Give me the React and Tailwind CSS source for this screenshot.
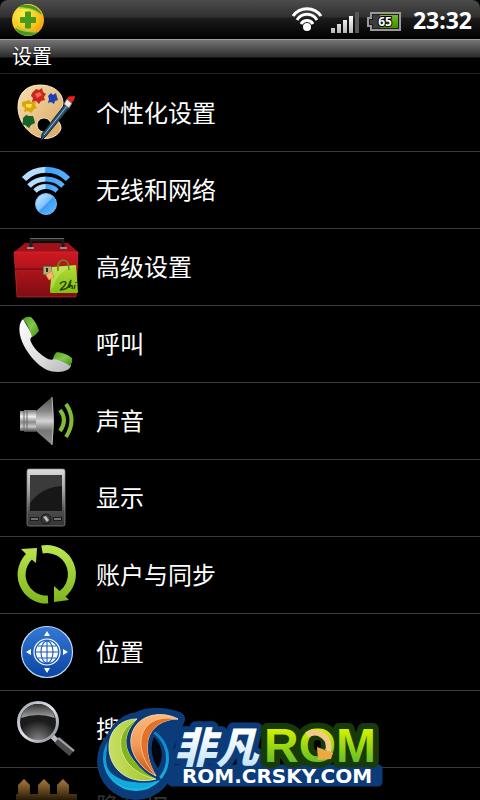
import React from "react";

const iconClass = "h-[76px] w-[68px] shrink-0";

function PaletteIcon() {
  return (
    <svg viewBox="0 0 68 76" className={iconClass} aria-hidden="true">
      <defs>
        <linearGradient id="wood" x1="0" y1="0" x2="1" y2="1">
          <stop offset="0" stopColor="#f6dfae" />
          <stop offset="1" stopColor="#d9a662" />
        </linearGradient>
      </defs>
      <path fillRule="evenodd" d="M28 10C42 10 51 18 51 28C51 34 45 36 45 42C45 46 49 48 49 53C48 60 38 65 30 63C16 60 6 46 6 32C6 18 15 10 28 10ZM32 43a7 7 0 1 0 0.1 0Z" fill="url(#wood)" stroke="#f9e9c5" strokeWidth="1" />
      <path d="M20 18l4-4 3 1 3-2 1 4 3 2-2 3 1 3-4 1-2 3-3-3-4 1 1-4-2-2Z" fill="#c9261d" />
      <path d="M23 19l5-2 2 3-5 3Z" fill="#ef6a4e" />
      <path d="M36 21l3-3 2 2 3-2 1 4 1 3-3 1-1 3-3-2-3 1 1-4Z" fill="#1d3fb4" />
      <path d="M10 27l4-1 3-1 2 2 5 0-1 3 2 3-4 2-1 3-4-2-4 1 1-4-3-2Z" fill="#dba60b" />
      <path d="M14 29l6 0-1 4-5-1Z" fill="#ffdf4d" />
      <path d="M11 43l3-3 3 1 4 0 1 3 1 4-4 2-2 3-4-3-3 0 1-4Z" fill="#17622b" />
      <path d="M54 28L58 32L34 61L29 66L30 59Z" fill="#2c516d" stroke="#0f2536" strokeWidth="1" />
      <path d="M55 31L32 60" stroke="#9dc3d8" strokeWidth="1" />
      <path d="M55 24L60 28L57 33L52 29Z" fill="#e8e8e8" stroke="#777" strokeWidth="1" />
      <path d="M55 24C56 20 60 22 63 21C63 24 61 27 59 28Z" fill="#e0261c" />
    </svg>
  );
}

function WirelessIcon() {
  return (
    <svg viewBox="0 0 68 76" className={iconClass} aria-hidden="true">
      <defs>
        <linearGradient id="arc" x1="0" y1="0" x2="1" y2="0">
          <stop offset="0.46" stopColor="#b4ddff" />
          <stop offset="0.5" stopColor="#3aa0fb" />
          <stop offset="1" stopColor="#58b1ff" />
        </linearGradient>
        <linearGradient id="ball" x1="0" y1="0" x2="1" y2="1">
          <stop offset="0.1" stopColor="#c4e4ff" />
          <stop offset="0.48" stopColor="#7fc2ff" />
          <stop offset="0.52" stopColor="#3b9df7" />
          <stop offset="1" stopColor="#6dbaff" />
        </linearGradient>
      </defs>
      <g fill="none" stroke="url(#arc)">
        <path d="M12 27A31 31 0 0 1 56 27" strokeWidth="6" />
        <path d="M17 34A24 24 0 0 1 51 34" strokeWidth="5" />
        <path d="M23 39A16 16 0 0 1 45 39" strokeWidth="5" />
      </g>
      <circle cx="34" cy="52" r="10.5" fill="url(#ball)" stroke="#6ab8fb" strokeWidth="1" />
    </svg>
  );
}

function ToolboxIcon() {
  return (
    <svg viewBox="0 0 68 76" className={iconClass} aria-hidden="true">
      <defs>
        <linearGradient id="box" x1="0" y1="0" x2="0" y2="1">
          <stop offset="0" stopColor="#cf1822" />
          <stop offset="0.35" stopColor="#b3141c" />
          <stop offset="1" stopColor="#7d0d12" />
        </linearGradient>
        <linearGradient id="bag" x1="0" y1="0" x2="0" y2="1">
          <stop offset="0" stopColor="#b5dc3a" />
          <stop offset="1" stopColor="#7fc010" />
        </linearGradient>
      </defs>
      <path d="M13 14H56L66 23H2Z" fill="#a11119" />
      <path d="M2 23H66L64 68H5Z" fill="url(#box)" stroke="#d8333a" strokeWidth="0.6" />
      <path d="M3 40H65" stroke="#58090d" strokeWidth="1.2" />
      <path d="M19 19V11H51V19" fill="none" stroke="#1d1d1d" strokeWidth="3" />
      <path d="M18 9.500H52" stroke="#666" strokeWidth="1" />
      <path d="M15 19h7M48 19h7" stroke="#8f8f8f" strokeWidth="2" />
      <rect x="31" y="37" width="9" height="9" fill="#b9a878" stroke="#4d4129" strokeWidth="1" />
      <path d="M35 39v4" stroke="#33290f" strokeWidth="2" />
      <path d="M40 38L64 36L66 63Q66 64 65 64H39Q38 64 38 63Z" fill="url(#bag)" />
      <path d="M42 57C45 44 54 40 64 37L40 38L38 62Z" fill="#d5ee7c" opacity="0.45" />
      <path d="M46 42C45 34 48 31 51 31C55 31 57 34 57 41" fill="none" stroke="#668c19" strokeWidth="1.6" />
      <path d="M34 46L40 42L42 48L37 51Z" fill="#f9b56c" stroke="#d98540" strokeWidth="0.7" />
      <path d="M48 55c2-3 6-3 6-1c-1 3-4 5-6 7c3-1 6 0 8-3l3-7-2 8c2-4 4-3 3 1M63 56l-1 4M64 53v1" fill="none" stroke="#243b09" strokeWidth="1.4" />
    </svg>
  );
}

function CallIcon() {
  return (
    <svg viewBox="0 0 68 76" className={iconClass} aria-hidden="true">
      <defs>
        <linearGradient id="handset" x1="0" y1="0" x2="1" y2="1">
          <stop offset="0" stopColor="#ffffff" />
          <stop offset="0.6" stopColor="#dcdcdc" />
          <stop offset="1" stopColor="#b5b5b5" />
        </linearGradient>
        <linearGradient id="cap" x1="0" y1="0" x2="1" y2="1">
          <stop offset="0" stopColor="#4c9c1b" />
          <stop offset="0.5" stopColor="#83c94a" />
          <stop offset="1" stopColor="#3f8a14" />
        </linearGradient>
      </defs>
      <path d="M11 13C7 17 7 23 8 29C10 38 16 48 24 56C31 63 38 66 46 66C53 66 59 63 59 59L43 52C41 54 39 54 36 53C29 49 22 43 19 36C18 33 18 32 21 30Z" fill="url(#handset)" />
      <path d="M11 13Q14 10 19 11Q25 17 27 25Q24 29 20 31Q17 20 11 13Z" fill="url(#cap)" />
      <path d="M45 46Q54 47 60 52Q61 56 58 60Q51 54 41 53Q42 48 45 46Z" fill="url(#cap)" />
    </svg>
  );
}

function SoundIcon() {
  return (
    <svg viewBox="0 0 68 76" className={iconClass} aria-hidden="true">
      <defs>
        <linearGradient id="metal" x1="0" y1="0" x2="0" y2="1">
          <stop offset="0" stopColor="#777" />
          <stop offset="0.3" stopColor="#efefef" />
          <stop offset="0.55" stopColor="#8a8a8a" />
          <stop offset="0.75" stopColor="#c9c9c9" />
          <stop offset="1" stopColor="#3c3c3c" />
        </linearGradient>
        <linearGradient id="cone" x1="0" y1="0" x2="0" y2="1">
          <stop offset="0" stopColor="#505050" />
          <stop offset="0.3" stopColor="#888" />
          <stop offset="0.5" stopColor="#d4d4d4" />
          <stop offset="0.7" stopColor="#777" />
          <stop offset="1" stopColor="#8c8c8c" />
        </linearGradient>
      </defs>
      <path d="M8 28H12V27H24V49H12V48H8Z" fill="url(#metal)" />
      <path d="M12 28V48M15 28V48" stroke="#666" strokeWidth="1" />
      <path d="M24 28L40 14Q43 38 40 62L24 48Z" fill="url(#cone)" />
      <path d="M40 14Q43 38 40 62" fill="none" stroke="#bbb" strokeWidth="1" />
      <g fill="none" stroke="#82bb35" strokeWidth="4">
        <path d="M48 27Q56 37 48 48" />
        <path d="M54 21Q65 37 54 54" />
      </g>
    </svg>
  );
}

function DisplayIcon() {
  return (
    <svg viewBox="0 0 68 76" className={iconClass} aria-hidden="true">
      <defs>
        <linearGradient id="device" x1="0" y1="0" x2="0" y2="1">
          <stop offset="0" stopColor="#dedede" />
          <stop offset="0.4" stopColor="#a0a0a0" />
          <stop offset="0.75" stopColor="#4b4b4b" />
          <stop offset="1" stopColor="#343434" />
        </linearGradient>
      </defs>
      <rect x="15" y="9" width="38" height="57" rx="2" fill="url(#device)" stroke="#8c8c8c" strokeWidth="0.7" />
      <rect x="18" y="15" width="32" height="36" fill="#171717" />
      <path d="M18 15H50V26Q30 27 18 43Z" fill="#3b3b3b" />
      <path d="M18 59h9M41 59h9" stroke="#1c1c1c" strokeWidth="4" />
      <path d="M19 59h7M42 59h7" stroke="#8c8c8c" strokeWidth="1.5" />
      <circle cx="34" cy="59" r="5" fill="#3a3a3a" stroke="#161616" strokeWidth="1" />
      <path d="M31 57L34 56L37 60L35 62Z" fill="#bdbdbd" />
    </svg>
  );
}

function SyncIcon() {
  return (
    <svg viewBox="0 0 68 76" className={iconClass} aria-hidden="true">
      <defs>
        <linearGradient id="sync" gradientUnits="userSpaceOnUse" x1="0" y1="9" x2="0" y2="67">
          <stop offset="0" stopColor="#bce650" />
          <stop offset="1" stopColor="#7fb41c" />
        </linearGradient>
      </defs>
      <g fill="none" stroke="url(#sync)" strokeWidth="8">
        <path d="M30 12.500A25.200 25.200 0 0 1 49 58" />
        <path d="M36 62.500A25 25 0 0 1 19 18" />
      </g>
      <path d="M9 12L25 11L24 26L19 22L14 17Z" fill="url(#sync)" />
      <path d="M42 49V65L57 63L51 57Z" fill="url(#sync)" />
    </svg>
  );
}

function LocationIcon() {
  return (
    <svg viewBox="0 0 68 76" className={iconClass} aria-hidden="true">
      <defs>
        <linearGradient id="disc" x1="0" y1="0" x2="0" y2="1">
          <stop offset="0" stopColor="#3479d6" />
          <stop offset="1" stopColor="#0a45a4" />
        </linearGradient>
      </defs>
      <circle cx="35" cy="38" r="25.5" fill="url(#disc)" stroke="#c4d9f4" strokeWidth="1.2" />
      <circle cx="35" cy="38" r="13" fill="none" stroke="#fff" strokeWidth="1.2" />
      <circle cx="35" cy="38" r="11" fill="#fff" />
      <g fill="none" stroke="#185abc" strokeWidth="1.1">
        <path d="M35 27V49M24 38H46M26 32H44M26 44H44" />
        <ellipse cx="35" cy="38" rx="6" ry="11" />
      </g>
      <path d="M35 17l3 5h-6ZM35 59l3-5h-6ZM14 38l5-3v6ZM56 38l-5-3v6Z" fill="#fff" />
    </svg>
  );
}

function SearchIcon() {
  return (
    <svg viewBox="0 0 68 76" className={iconClass} aria-hidden="true">
      <defs>
        <radialGradient id="lens" cx="0.5" cy="1" r="0.9">
          <stop offset="0" stopColor="#8a8a8a" />
          <stop offset="0.6" stopColor="#1c1c1c" />
          <stop offset="1" stopColor="#1a1a1a" />
        </radialGradient>
        <linearGradient id="glare" x1="0" y1="0" x2="0" y2="1">
          <stop offset="0" stopColor="#333" />
          <stop offset="1" stopColor="#a5a5a5" />
        </linearGradient>
        <linearGradient id="rim" x1="0" y1="0" x2="1" y2="1">
          <stop offset="0" stopColor="#9ba0ab" />
          <stop offset="0.5" stopColor="#e3e6ec" />
          <stop offset="1" stopColor="#7c818c" />
        </linearGradient>
      </defs>
      <path d="M40 45L45 50" stroke="#b8bcc6" strokeWidth="5" />
      <path d="M45 49L60 62" stroke="#4b4b4b" strokeWidth="8" />
      <path d="M46 47L62 60" stroke="#a5a5a5" strokeWidth="2" />
      <circle cx="26" cy="31" r="19.5" fill="url(#lens)" stroke="url(#rim)" strokeWidth="3" />
      <path d="M9 27C11 18 18 13 26 13C34 13 41 18 43 27Q26 21 9 27Z" fill="url(#glare)" />
    </svg>
  );
}

function FenceIcon() {
  return (
    <svg viewBox="0 0 68 76" className={iconClass} aria-hidden="true">
      <defs>
        <linearGradient id="fence" gradientUnits="userSpaceOnUse" x1="0" y1="11" x2="0" y2="34">
          <stop offset="0" stopColor="#a97c3c" />
          <stop offset="1" stopColor="#1b1003" />
        </linearGradient>
      </defs>
      <path d="M4 26H65V60H4Z" fill="url(#fence)" />
      <path d="M6 17L12 11L18 17V66H6ZM26 17L32 11L38 17V66H26ZM45 17L51 11L57 17V66H45Z" fill="url(#fence)" />
    </svg>
  );
}

const rows = [
  { label: "个性化设置", Icon: PaletteIcon },
  { label: "无线和网络", Icon: WirelessIcon },
  { label: "高级设置", Icon: ToolboxIcon },
  { label: "呼叫", Icon: CallIcon },
  { label: "声音", Icon: SoundIcon },
  { label: "显示", Icon: DisplayIcon },
  { label: "账户与同步", Icon: SyncIcon },
  { label: "位置", Icon: LocationIcon },
  { label: "搜索", Icon: SearchIcon },
  { label: "隐私权", Icon: FenceIcon, faded: true },
];

function ShieldIcon() {
  return (
    <svg viewBox="0 0 32 32" className="size-8" aria-hidden="true">
      <defs>
        <radialGradient id="shield" cx="0.35" cy="0.3" r="0.8">
          <stop offset="0" stopColor="#fff04a" />
          <stop offset="0.6" stopColor="#fbc51c" />
          <stop offset="1" stopColor="#ef9a10" />
        </radialGradient>
      </defs>
      <circle cx="16" cy="16" r="16" fill="url(#shield)" />
      <path d="M6 3C15-2 27 2 30 11C27 9 26 7 22 6C17 4 12 4 6 3Z" fill="#3f9a25" />
      <path d="M7 4C15 4 21 4 27 10" fill="none" stroke="#8fcf4a" strokeWidth="1" />
      <path d="M4 24C8 27 13 28 26 28C18 34 7 32 3 24Z" fill="#3f9a25" />
      <path d="M5 22C9 26 15 28 24 28" fill="none" stroke="#9ad04c" strokeWidth="1.5" />
      <path d="M13.500 8h5v5.500h5v5h-5v5.500h-5v-5.500h-5v-5h5Z" fill="#4a9a1d" stroke="#4a9a1d" strokeWidth="1" strokeLinejoin="round" />
    </svg>
  );
}

function WifiStatus() {
  return (
    <svg viewBox="0 0 32 28" className="h-7 w-8" aria-hidden="true">
      <g fill="none" stroke="#fff" strokeWidth="3">
        <path d="M2 10A17 17 0 0 1 30 10" />
        <path d="M6 14A11.500 11.500 0 0 1 26 14" />
        <path d="M10 18A7 7 0 0 1 22 18" />
      </g>
      <circle cx="16" cy="21" r="4" fill="#fff" />
    </svg>
  );
}

function SignalStatus() {
  return (
    <svg viewBox="0 0 28 22" className="h-[22px] w-7" aria-hidden="true">
      <defs>
        <linearGradient id="bars" gradientUnits="userSpaceOnUse" x1="0" y1="5" x2="0" y2="22">
          <stop offset="0" stopColor="#fff" />
          <stop offset="1" stopColor="#b5b5b5" />
        </linearGradient>
      </defs>
      <path d="M0 17h4v5h-4ZM6 13h4v9h-4ZM12 9h4v13h-4ZM18 5h4v17h-4Z" fill="url(#bars)" />
      <path d="M24 1h4v21h-4Z" fill="#575757" />
    </svg>
  );
}

function BatteryStatus() {
  return (
    <svg viewBox="0 0 34 20" className="h-5 w-[34px]" role="img" aria-label="65%">
      <defs>
        <linearGradient id="charge" x1="0" y1="0" x2="0" y2="1">
          <stop offset="0" stopColor="#76b92d" />
          <stop offset="1" stopColor="#3f8f06" />
        </linearGradient>
      </defs>
      <path d="M4 1H33V18H4V14H1V6H4Z" fill="#1d1d1d" stroke="#999" strokeWidth="2" />
      <path d="M6 3H15V16H6V12H3V8H6Z" fill="#3c3c3c" />
      <rect x="13" y="3" width="18" height="13" fill="url(#charge)" />
      <text x="18" y="14" textAnchor="middle" className="fill-white stroke-black font-['Noto_Sans',sans-serif] text-[12px] font-bold [paint-order:stroke]" strokeWidth="2">65</text>
    </svg>
  );
}

function RomLogo() {
  return (
    <svg viewBox="96 708 288 92" className="pointer-events-none absolute bottom-0 left-1/2 h-[92px] w-72 -translate-x-1/2">
      <defs>
        <linearGradient id="lime" x1="0" y1="0" x2="0" y2="1">
          <stop offset="0.2" stopColor="#d2f000" />
          <stop offset="0.85" stopColor="#5fbb2a" />
        </linearGradient>
        <linearGradient id="ice" x1="0" y1="0" x2="0" y2="1">
          <stop offset="0.3" stopColor="#ffffff" />
          <stop offset="1" stopColor="#b5dcf8" />
        </linearGradient>
        <linearGradient id="leaf" x1="0" y1="0" x2="1" y2="0">
          <stop offset="0" stopColor="#c9de62" />
          <stop offset="1" stopColor="#9fc52c" />
        </linearGradient>
        <linearGradient id="flame" x1="0" y1="0" x2="0" y2="1">
          <stop offset="0" stopColor="#fbb878" />
          <stop offset="0.5" stopColor="#f29a55" />
          <stop offset="1" stopColor="#c94f10" />
        </linearGradient>
        <linearGradient id="ring" x1="0" y1="0" x2="0" y2="1">
          <stop offset="0" stopColor="#0a7cc0" />
          <stop offset="1" stopColor="#17bbe4" />
        </linearGradient>
      </defs>
      <circle cx="136" cy="761" r="39" fill="#0b3b78" />
      <path d="M109 755C109 738 122 720 138 719C146 714 164 713 178 719L155 775Z" fill="#0b3b78" stroke="#0b3b78" strokeWidth="14" strokeLinejoin="round" />
      <path d="M172 769H378V782H172Z" fill="#0b3b78" stroke="#0b3b78" strokeWidth="9" strokeLinejoin="round" />
      <path d="M154 737C163 746 164 758 158 768C151 758 150 746 154 737Z" fill="#02060c" />
      <circle cx="136" cy="758" r="31.5" fill="none" stroke="url(#ring)" strokeWidth="3" />
      <path d="M106 766C113 780 134 788 160 777C146 796 115 791 106 766Z" fill="#13a9db" />
      <path d="M137 719C121 719 109 730 109 747C109 770 130 786 156 779C140 770 127 756 126 744C125 734 131 725 137 719Z" fill="url(#leaf)" stroke="#0b3b78" strokeWidth="4" />
      <path d="M137 719C121 719 109 730 109 747C109 770 130 786 156 779C140 770 127 756 126 744C125 734 131 725 137 719Z" fill="url(#leaf)" stroke="#f0f7c0" strokeWidth="0.8" />
      <path d="M137 719C124 727 119 736 121 748C124 764 138 775 156 779C140 770 127 756 126 744C125 734 131 725 137 719Z" fill="#84b31c" />
      <path d="M137 719C124 727 119 736 121 748C124 764 138 775 156 779" fill="none" stroke="#e2efa0" strokeWidth="0.8" />
      <path d="M178 719C159 709 134 716 131 738C129 755 143 770 156 776C149 764 146 752 148 740C151 727 163 719 178 719Z" fill="url(#flame)" stroke="#0b3b78" strokeWidth="5" />
      <path d="M178 719C159 709 134 716 131 738C129 755 143 770 156 776C149 764 146 752 148 740C151 727 163 719 178 719Z" fill="url(#flame)" stroke="#ffdcb8" strokeWidth="0.8" />
      <path d="M178 719C156 715 143 724 141 740C140 755 148 767 156 776C149 764 146 752 148 740C151 727 163 719 178 719Z" fill="#e2722a" />
      <path d="M178 719C156 715 143 724 141 740C140 755 148 767 156 776" fill="none" stroke="#ffd0a0" strokeWidth="0.8" />
      <text x="174" y="763" fill="url(#ice)" strokeWidth="12" className="stroke-[#0b3b78] font-['Noto_Sans_CJK_SC',sans-serif] text-[42px] font-black italic [paint-order:stroke] [stroke-linejoin:round]">非凡</text>
      <text x="320" y="762" textAnchor="middle" fill="url(#lime)" strokeWidth="12" className="stroke-[#173a08] font-['Liberation_Sans',Arial,sans-serif] text-[48px] font-bold [paint-order:stroke] [stroke-linejoin:round]">ROM</text>
      <path d="M307 735A14 14 0 0 1 328 751" fill="none" stroke="#f3c98a" strokeWidth="6" />
      <path d="M317 747L333 753L331 759L318 760Z" fill="#eda944" />
      <text x="277" y="783" textAnchor="middle" strokeWidth="4" className="fill-white stroke-[#0b3b78] font-['DejaVu_Sans',sans-serif] text-[20px] font-bold [paint-order:stroke] [stroke-linejoin:round]">ROM.CRSKY.COM</text>
    </svg>
  );
}

export default function App() {
  return (
    <div className="relative flex h-screen flex-col overflow-hidden bg-black font-['Noto_Sans_CJK_SC',sans-serif] text-white">
      <header className="flex h-[39px] shrink-0 items-center justify-between rounded-t-lg bg-[linear-gradient(to_bottom,#4c4c4c_0,#303030_17px,#1c1c1c_18px,#000_38px)] pr-2 pl-3">
        <ShieldIcon />
        <div className="flex items-center gap-2">
          <WifiStatus />
          <div className="flex items-center gap-2 pt-1">
            <SignalStatus />
            <BatteryStatus />
          </div>
          <time className="pl-1 font-['Noto_Sans',sans-serif] text-[23px] leading-8 font-bold">23:32</time>
        </div>
      </header>
      <h1 className="h-[35px] shrink-0 border-t border-b border-t-[#a0a0a0] border-b-[#202020] bg-[linear-gradient(to_bottom,#757575_0,#2c2c2c_17px,#000_18px)] px-3 text-[20px] leading-8 [text-shadow:0_1px_2px_#000]">
        设置
      </h1>
      <main className="min-h-0 flex-1 overflow-hidden pt-px">
        <ul>
          {rows.map(({ label, Icon, faded }) => (
            <li key={label} className="border-b border-[#3c3c3c]">
              <button type="button" className="flex h-[76px] w-full items-center gap-4 px-3 text-left text-[24px] leading-8">
                <Icon />
                <span className={faded ? "pb-0.5 text-[#333333]" : "pb-0.5 text-white"}>{label}</span>
              </button>
            </li>
          ))}
        </ul>
      </main>
      <RomLogo />
    </div>
  );
}
